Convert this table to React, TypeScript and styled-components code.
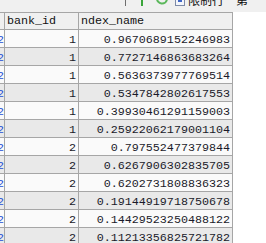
import { Fragment } from 'react';
import styled, { createGlobalStyle } from 'styled-components';

const GlobalStyle = createGlobalStyle`
  html, body {
    margin: 0;
    padding: 0;
    background: #ffffff;
    overflow: hidden;
  }
`;

const Page = styled.div`
  width: 266px;
  height: 243px;
  overflow: hidden;
  background: #ffffff;
`;

const Toolbar = styled.div`
  height: 12px;
  box-sizing: border-box;
  padding: 0 0 6px 125px;
  display: flex;
  align-items: flex-end;
  background: #f0f0f0;
  overflow: hidden;
`;

const Separator = styled.div`
  width: 1px;
  height: 12px;
  background: #6e6e6e;
  margin-right: 9px;
`;

const ToolIcon = styled.svg<{ $gap: number }>`
  flex: none;
  display: block;
  margin-right: ${(p) => p.$gap}px;
`;

const ToolText = styled.span<{ $gap?: number }>`
  flex: none;
  font-family: 'Noto Sans CJK SC', 'Liberation Sans', sans-serif;
  font-size: 12px;
  line-height: 12px;
  height: 12px;
  color: #111;
  margin-right: ${(p) => p.$gap ?? 0}px;
`;

const Grid = styled.div`
  display: inline-grid;
  grid-template-columns: 4px 73px 153px;
  grid-auto-rows: 17px;
  grid-template-rows: 16px;
  gap: 1px;
  padding: 1px 1px 0 0;
  background: #a6a6a6;
`;

const HeadCell = styled.div`
  background: #f0f0f0;
  font-family: 'Liberation Mono', monospace;
  font-size: 11.7px;
  line-height: 13px;
  padding: 2px 0 0 2px;
  box-sizing: border-box;
  color: #111;
  white-space: nowrap;
  overflow: hidden;
`;

const Cell = styled.div<{ $alt: boolean }>`
  display: flex;
  justify-content: flex-end;
  background: ${(p) => (p.$alt ? '#e9e9e9' : '#fafafa')};
  font-family: 'Liberation Mono', monospace;
  font-size: 11.7px;
  line-height: 13px;
  padding: 4px 2px 0 0;
  box-sizing: border-box;
  color: #1a1a2a;
  white-space: nowrap;
  overflow: hidden;
`;

const RowNo = styled(Cell)`
  padding-right: 0;
  color: #1f4fd6;
`;

const rows: [number, string][] = [
  [1, '0.9670689152246983'],
  [1, '0.7727146863683264'],
  [1, '0.5636373977769514'],
  [1, '0.5347842802617553'],
  [1, '0.39930461291159003'],
  [1, '0.25922062179001104'],
  [2, '0.797552477379844'],
  [2, '0.6267906302835705'],
  [2, '0.6202731808836323'],
  [2, '0.19144919718750678'],
  [2, '0.14429523250488122'],
  [2, '0.11213356825721782'],
];

export default function App() {
  return (
    <Page>
      <GlobalStyle />
      <Toolbar>
        <Separator />
        <ToolIcon $gap={6} width="14" height="12" viewBox="0 0 14 12">
          <rect x="6" y="0" width="2" height="12" fill="#3aa53a" />
        </ToolIcon>
        <ToolIcon $gap={6} width="14" height="12" viewBox="0 0 14 12">
          <path d="M2 4 A5 5 0 0 0 12 5" stroke="#5cb85c" strokeWidth="2" fill="none" />
          <path d="M9 2 L13 6 L13 2 Z" fill="#5cb85c" />
        </ToolIcon>
        <ToolIcon $gap={3} width="10" height="12" viewBox="0 0 10 12">
          <rect x="0.5" y="1.5" width="9" height="10" fill="#f4f6fb" stroke="#7d8aa8" />
          <rect x="3" y="5" width="4" height="3" fill="#3f66c8" />
        </ToolIcon>
        <ToolText $gap={12}>限制行</ToolText>
        <ToolText>第</ToolText>
      </Toolbar>
      <Grid>
        <HeadCell />
        <HeadCell>bank_id</HeadCell>
        <HeadCell>ndex_name</HeadCell>
        {rows.map(([bank, value], i) => (
          <Fragment key={i}>
            <RowNo $alt={i % 2 === 1}>2</RowNo>
            <Cell $alt={i % 2 === 1}>{bank}</Cell>
            <Cell $alt={i % 2 === 1}>{value}</Cell>
          </Fragment>
        ))}
      </Grid>
    </Page>
  );
}
